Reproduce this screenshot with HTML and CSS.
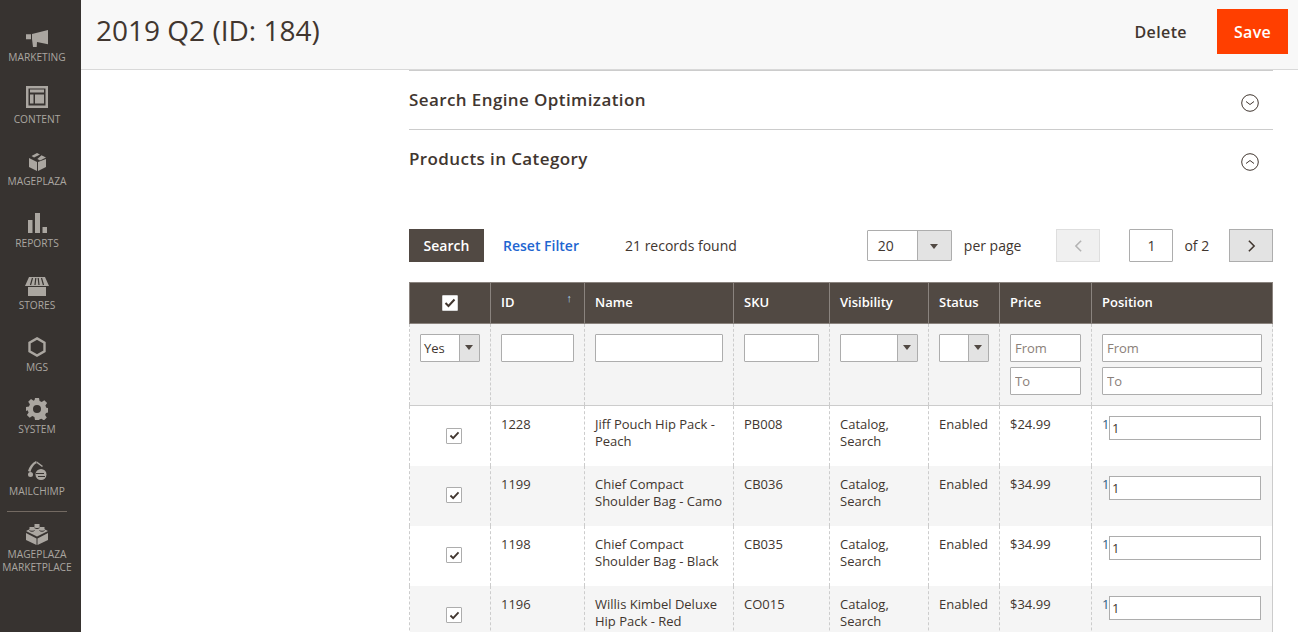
FILE: index.html
```html
<!DOCTYPE html>
<html lang="en">
    <head>
        <meta charset="UTF-8" />
        <title>2019 Q2 (ID: 184)</title>
        <link rel="stylesheet" href="styles.css">
    </head>
    <body>
        <div class="page">
            <!-- Admin menu -->
            <nav class="menu">
                <a class="menu-item">
                    <svg viewBox="0 0 22 17" width="22" height="17"><path d="M0 4.300h5v5H0zM6 4 22 0v14.300L11 12l-.3 5H7L6 9z"/></svg>
                    <span>MARKETING</span>
                </a>
                <a class="menu-item">
                    <svg class="gap-wide" viewBox="0 0 22 22" width="22" height="22"><path fill-rule="evenodd" d="M0 0h22v22H0zM2.500 2.500v17h17v-17z"/><path d="M4 3.500h14v3H4zM4 8.500h3.500v9H4zM9 8.500h9v9H9z"/></svg>
                    <span>CONTENT</span>
                </a>
                <a class="menu-item">
                    <svg viewBox="0 0 17 18" width="17" height="18"><path d="M8 0l3 1.500-6 3-2.500-1.500zM12.500 2.300 17 4.500 11 7.500 8.300 6zM0 5l8 4v9l-8-4zM17 6v8l-8 4V9z"/></svg>
                    <span>MAGEPLAZA</span>
                </a>
                <a class="menu-item">
                    <svg viewBox="0 0 19 20" width="19" height="20"><path d="M0 7h4.500v13H0zM7 0h5v20H7zM14.500 14H19v6h-4.500z"/></svg>
                    <span>REPORTS</span>
                </a>
                <a class="menu-item">
                    <svg class="gap-tight" viewBox="0 0 24 19" width="24" height="19"><path d="M4 0h16l4 9H0zM3 10h18v9H3z"/><path d="M7.500 1 5.500 8M10.800 1l-.8 7M13.200 1l.8 7M16.500 1l2 7" stroke="#373330" stroke-width="1.200" fill="none"/></svg>
                    <span>STORES</span>
                </a>
                <a class="menu-item">
                    <svg viewBox="0 0 18 20" width="18" height="20"><path class="stroke" fill="none" stroke-width="2.400" d="M9 1.400l7.500 4.300v8.600L9 18.600l-7.500-4.300V5.700z"/></svg>
                    <span>MGS</span>
                </a>
                <a class="menu-item">
                    <svg class="gap-tight" viewBox="0 0 22 22" width="22" height="22"><path fill-rule="evenodd" d="M9 0h4l.6 3 2.100.9 2.600-1.700 2.800 2.800-1.700 2.600.9 2.100 2.700.6v4l-3 .6-.9 2.100 1.700 2.600-2.800 2.800-2.600-1.700-2.100.9L13 22H9l-.6-3-2.100-.9-2.600 1.700-2.800-2.800 1.700-2.600-.9-2.100L0 13V9l3-.6.9-2.100-1.700-2.600L5 1l2.600 1.700 1-.7zM11 7a4 4 0 1 0 0 8 4 4 0 0 0 0-8z"/></svg>
                    <span>SYSTEM</span>
                </a>
                <a class="menu-item">
                    <svg class="gap-wide" viewBox="0 0 20 20" width="20" height="20"><path d="M9 1C5 3 2 7 1 11l2.500 1C4.500 8 7 4 10 3zM10 1.500l6 4.500-1 1-6-4.500z"/><circle cx="3.500" cy="14.500" r="2.500"/><ellipse cx="14" cy="14.500" rx="5.500" ry="5.500"/><path d="M9 13.500h8M11 16.500h7" stroke="#373330" fill="none"/></svg>
                    <span>MAILCHIMP</span>
                </a>
                <a class="menu-item menu-last">
                    <svg class="gap-tight" viewBox="0 0 22 22" width="22" height="22"><path d="M11 2.500 22 8l-11 5.500L0 8zM0 10l10.500 5.500V22L0 17zM22 10v7l-10.500 5v-6.500z"/><path d="M11 1v3M6 4v3M16 4v3" stroke="#aaa6a0" stroke-width="5" fill="none"/><path d="M8.500 4.800c1 1 4 1 5 0M3.500 7.500c1 1 4 1 5 0M13.500 7.500c1 1 4 1 5 0" stroke="#373330" fill="none"/></svg>
                    <span>MAGEPLAZA<br>MARKETPLACE</span>
                </a>
            </nav>

            <div class="main">
                <header class="page-head">
                    <h1>2019 Q2 (ID: 184)</h1>
                    <div class="page-actions">
                        <button class="delete-btn">Delete</button>
                        <button class="save-btn">Save</button>
                    </div>
                </header>

                <div class="content">
                    <div class="section section-seo">
                        <h2>Search Engine Optimization</h2>
                        <svg class="toggle" viewBox="0 0 18 18" width="18" height="18"><circle cx="9" cy="9" r="8.300"/><path d="M5 7.500l4 3 4-3"/></svg>
                    </div>
                    <div class="section section-products">
                        <h2>Products in Category</h2>
                        <svg class="toggle" viewBox="0 0 18 18" width="18" height="18"><circle cx="9" cy="9" r="8.300"/><path d="M5 10.500l4-3 4 3"/></svg>
                    </div>

                    <!-- Grid toolbar -->
                    <div class="toolbar">
                        <button class="search-btn">Search</button>
                        <a class="reset-link">Reset Filter</a>
                        <span class="records">21 records found</span>
                        <div class="select per-page-select"><span>20</span><i class="arrow"></i></div>
                        <span class="per-page">per page</span>
                        <button class="page-btn page-prev"><svg viewBox="0 0 10 16" width="9" height="14"><path d="M8 2 2 8l6 6"/></svg></button>
                        <input class="page-input" value="1">
                        <span class="page-of">of 2</span>
                        <button class="page-btn page-next"><svg viewBox="0 0 10 16" width="9" height="14"><path d="M2 2l6 6-6 6"/></svg></button>
                    </div>

                    <table class="grid">
                        <colgroup>
                            <col class="col-check"><col class="col-id"><col class="col-name"><col class="col-sku">
                            <col class="col-vis"><col class="col-status"><col class="col-price"><col class="col-pos">
                        </colgroup>
                        <thead>
                            <tr class="head-row">
                                <th class="head-check"><span class="check-box check-head"><svg viewBox="0 0 12 10" width="12" height="10"><path d="M1.500 5l3 3 6-6.500"/></svg></span></th>
                                <th class="head-id">ID<span class="sort">↑</span></th>
                                <th>Name</th>
                                <th>SKU</th>
                                <th>Visibility</th>
                                <th>Status</th>
                                <th>Price</th>
                                <th>Position</th>
                            </tr>
                            <tr class="filter-row">
                                <td><div class="select yes-select"><span>Yes</span><i class="arrow"></i></div></td>
                                <td><input class="filter-input"></td>
                                <td><input class="filter-input"></td>
                                <td><input class="filter-input"></td>
                                <td><div class="select"><span></span><i class="arrow"></i></div></td>
                                <td><div class="select"><span></span><i class="arrow"></i></div></td>
                                <td><input class="filter-input" placeholder="From"><input class="filter-input filter-to" placeholder="To"></td>
                                <td><input class="filter-input" placeholder="From"><input class="filter-input filter-to" placeholder="To"></td>
                            </tr>
                        </thead>
                        <tbody>
                            <tr>
                                <td class="cell-check"><span class="check-box"><svg viewBox="0 0 12 10" width="11" height="9"><path d="M1.500 5l3 3 6-6.500"/></svg></span></td>
                                <td>1228</td>
                                <td>Jiff Pouch Hip Pack - Peach</td>
                                <td>PB008</td>
                                <td>Catalog, Search</td>
                                <td>Enabled</td>
                                <td>$24.99</td>
                                <td class="cell-pos"><span class="pos-num">1</span><input class="pos-input" value="1"></td>
                            </tr>
                            <tr class="row-alt">
                                <td class="cell-check"><span class="check-box"><svg viewBox="0 0 12 10" width="11" height="9"><path d="M1.500 5l3 3 6-6.500"/></svg></span></td>
                                <td>1199</td>
                                <td>Chief Compact Shoulder Bag - Camo</td>
                                <td>CB036</td>
                                <td>Catalog, Search</td>
                                <td>Enabled</td>
                                <td>$34.99</td>
                                <td class="cell-pos"><span class="pos-num">1</span><input class="pos-input" value="1"></td>
                            </tr>
                            <tr>
                                <td class="cell-check"><span class="check-box"><svg viewBox="0 0 12 10" width="11" height="9"><path d="M1.500 5l3 3 6-6.500"/></svg></span></td>
                                <td>1198</td>
                                <td>Chief Compact Shoulder Bag - Black</td>
                                <td>CB035</td>
                                <td>Catalog, Search</td>
                                <td>Enabled</td>
                                <td>$34.99</td>
                                <td class="cell-pos"><span class="pos-num">1</span><input class="pos-input" value="1"></td>
                            </tr>
                            <tr class="row-alt">
                                <td class="cell-check"><span class="check-box"><svg viewBox="0 0 12 10" width="11" height="9"><path d="M1.500 5l3 3 6-6.500"/></svg></span></td>
                                <td>1196</td>
                                <td>Willis Kimbel Deluxe Hip Pack - Red</td>
                                <td>CO015</td>
                                <td>Catalog, Search</td>
                                <td>Enabled</td>
                                <td>$34.99</td>
                                <td class="cell-pos"><span class="pos-num">1</span><input class="pos-input" value="1"></td>
                            </tr>
                        </tbody>
                    </table>
                </div>
            </div>
        </div>
    </body>
</html>
```

FILE: styles.css
```css
html, body {
    height: 100%;
    margin: 0;
    overflow: hidden;
}
body {
    font-family: "Open Sans", Arial, sans-serif;
    font-size: 13px;
    color: #41362f;
    background: white;
}
button, input {
    font-family: inherit;
}
.page {
    display: flex;
    height: 632px;
}

/* Admin menu */
.menu {
    flex: 0 0 81px;
    width: 81px;
    background-color: #373330;
    display: flex;
    flex-direction: column;
    align-items: center;
    padding: 28px 7px 0 0;
    box-sizing: border-box;
}
.menu-item {
    display: flex;
    flex-direction: column;
    align-items: center;
    justify-content: flex-end;
    height: 62px;
    flex: none;
    width: 100%;
    box-sizing: border-box;
    color: #aaa6a0;
    font-size: 10.2px;
    line-height: 13px;
    text-align: center;
    white-space: nowrap;
}
.menu-item:first-child {
    height: 36px;
}
.menu-item svg {
    fill: #aaa6a0;
    margin-bottom: 4px;
}
.menu-item svg.gap-tight {
    margin-bottom: 3px;
}
.menu-item svg.gap-wide {
    margin-bottom: 5px;
}
.menu-item svg .stroke {
    stroke: #aaa6a0;
}
.menu-last {
    height: auto;
    width: 60px;
    margin-top: 13px;
    padding-top: 11px;
    border-top: 1px solid #736a62;
}

/* Page header */
.main {
    flex: 1;
    min-width: 0;
}
.page-head {
    height: 60px;
    border-bottom: 1px solid #d9d9d9;
    background-color: #f8f8f8;
    display: flex;
    align-items: flex-start;
    justify-content: space-between;
    padding: 9px 10px 0 15px;
}
.page-head h1 {
    margin: -1px 0 0;
    font-size: 28px;
    font-weight: 400;
    line-height: 44px;
    color: #41362f;
}
.page-actions {
    display: flex;
    align-items: center;
    gap: 30px;
}
.delete-btn {
    background: none;
    border: none;
    padding: 0;
    font-size: 16px;
    font-weight: 600;
    letter-spacing: .4px;
    color: #41362f;
}
.save-btn {
    width: 71px;
    height: 45px;
    border: none;
    background-color: #ff3f00;
    color: white;
    font-size: 16px;
    font-weight: 600;
    letter-spacing: .3px;
}

/* Collapsible sections */
.content {
    margin: 0 25px 0 328px;
}
.section {
    display: flex;
    justify-content: space-between;
    align-items: flex-start;
    border-top: 1px solid #cccccc;
}
.section-seo {
    height: 58px;
}
.section-products {
    height: 99px;
}
.section h2 {
    margin: 17px 0 0;
    font-size: 17px;
    line-height: 24px;
    font-weight: 600;
    letter-spacing: .4px;
    color: #41362f;
}
.toggle {
    margin: 23px 14px 0 0;
    fill: none;
    stroke: #41362f;
    stroke-width: 1;
}

/* Toolbar */
.toolbar {
    display: flex;
    align-items: center;
    height: 33px;
    margin-bottom: 20px;
    font-size: 14px;
    white-space: nowrap;
}
.toolbar > * {
    flex: none;
}
.search-btn {
    width: 75px;
    height: 33px;
    border: none;
    background-color: #514943;
    color: white;
    font-size: 14px;
    font-weight: 600;
}
.reset-link {
    margin-left: 19px;
    color: #1f66d1;
    font-weight: 600;
}
.records {
    margin-left: 46px;
}
.select {
    display: flex;
    height: 28px;
    border: 1px solid #adadad;
    border-radius: 1px;
    background: white;
    box-sizing: border-box;
    width: 78px;
}
.select span {
    flex: 1;
    padding-left: 3px;
    line-height: 26px;
    font-size: 13px;
}
.select .arrow {
    flex: 0 0 19px;
    position: relative;
    background-color: #e3e3e3;
    border-left: 1px solid #adadad;
}
.select .arrow::after {
    content: "";
    position: absolute;
    left: 5px;
    top: 10px;
    border: 4px solid transparent;
    border-top: 5px solid #514943;
    border-bottom: 0;
}
.per-page-select {
    width: 85px;
    height: 31px;
    margin-left: 130px;
}
.per-page-select span {
    padding-left: 10px;
    line-height: 29px;
    font-size: 14px;
}
.per-page-select .arrow {
    flex: 0 0 33px;
}
.per-page-select .arrow::after {
    left: 12px;
    top: 13px;
}
.per-page {
    margin-left: 12px;
}
.page-btn {
    width: 44px;
    height: 33px;
    padding: 0;
    box-sizing: border-box;
    display: flex;
    align-items: center;
    justify-content: center;
}
.page-btn svg {
    fill: none;
    stroke-width: 1.800;
}
.page-prev {
    margin-left: 35px;
    background-color: #f0f0f0;
    border: 1px solid #dedede;
}
.page-prev svg {
    stroke: #b3b3b3;
}
.page-next {
    margin-left: 20px;
    background-color: #e3e3e3;
    border: 1px solid #adadad;
}
.page-next svg {
    stroke: #41362f;
}
.page-input {
    width: 44px;
    height: 33px;
    margin: 0 0 0 29px;
    border: 1px solid #adadad;
    border-radius: 1px;
    box-sizing: border-box;
    text-align: center;
    font-size: 14px;
    color: #41362f;
    padding: 0;
}
.page-of {
    margin-left: 11px;
}

/* Grid */
.grid {
    width: 863px;
    table-layout: fixed;
    border-collapse: collapse;
    font-size: 13px;
}
.col-check { width: 81px; }
.col-id { width: 94px; }
.col-name { width: 149px; }
.col-sku { width: 96px; }
.col-vis { width: 99px; }
.col-status { width: 71px; }
.col-price { width: 92px; }
.col-pos { width: 181px; }
.head-row th {
    height: 41px;
    padding: 0 10px 2px;
    box-sizing: border-box;
    background-color: #514943;
    border: 1px solid #8a837e;
    color: white;
    font-size: 13px;
    font-weight: 600;
    text-align: left;
}
.head-row .head-check {
    padding: 0;
    text-align: center;
}
.head-id {
    position: relative;
}
.sort {
    position: absolute;
    right: 12px;
    top: 7px;
    font-size: 11px;
    font-weight: 400;
    color: #aad4ee;
}
.check-box {
    display: inline-flex;
    align-items: center;
    justify-content: center;
    width: 16px;
    height: 16px;
    box-sizing: border-box;
    border: 1px solid #adadad;
    border-radius: 1px;
    background: white;
}
.check-box svg {
    fill: none;
    stroke: #41362f;
    stroke-width: 2;
}
.check-head {
    margin: -8px 0 0 0;
    border-color: #d6d6d6;
}
.filter-row td {
    height: 82px;
    padding: 10px 10px 0;
    box-sizing: border-box;
    vertical-align: top;
    background-color: #f4f4f4;
    border-left: 1px dashed #cccccc;
    border-right: 1px dashed #cccccc;
    border-bottom: 1px solid #cccccc;
}
.filter-input {
    display: block;
    width: 100%;
    height: 28px;
    box-sizing: border-box;
    border: 1px solid #adadad;
    border-radius: 1px;
    padding: 0 4px;
    font-size: 13px;
    background: white;
}
.filter-input::placeholder {
    color: #8a8079;
    opacity: 1;
}
.filter-to {
    margin-top: 5px;
}
.filter-row .select {
    width: 100%;
}
tbody td {
    height: 60px;
    padding: 10px;
    box-sizing: border-box;
    vertical-align: top;
    line-height: 17px;
    border-left: 1px dashed #cccccc;
    border-right: 1px dashed #cccccc;
    color: #41362f;
}
tbody td:last-child {
    border-right: 1px solid #cccccc;
}
.row-alt td {
    background-color: #f5f5f5;
}
tbody .cell-check {
    padding: 21px 0 0 8px;
    text-align: center;
}
.cell-pos {
    position: relative;
}
tbody .pos-num {
    color: #2f5f85;
}
.pos-input {
    position: absolute;
    left: 17px;
    top: 10px;
    width: 152px;
    height: 24px;
    box-sizing: border-box;
    border: 1px solid #adadad;
    padding: 0 2px;
    font-size: 13px;
    color: #41362f;
    background: white;
}
```
